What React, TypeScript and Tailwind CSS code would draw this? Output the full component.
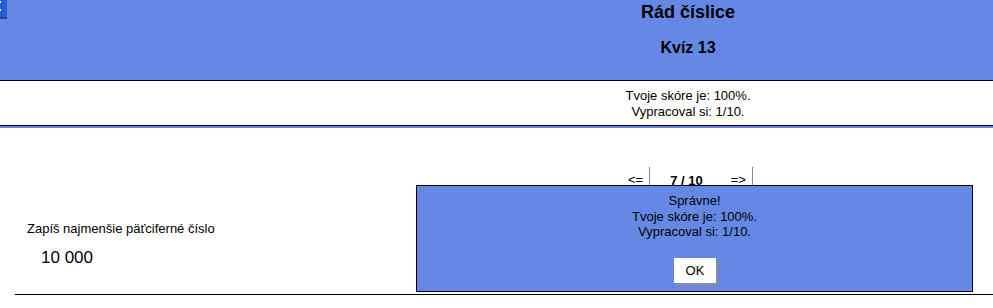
import React from "react";

export default function App() {
  return (
    <div className="relative w-[993px] h-[308px] overflow-hidden bg-white text-black font-['Liberation_Sans',Arial,sans-serif]">
      {/* header */}
      <div className="h-[81px] w-[1376px] bg-[#6488e4] border-b border-black text-center">
        <div className="pt-[2px] text-[18px] leading-[21px] font-bold">Rád číslice</div>
        <div className="mt-[15px] text-[16px] leading-[19px] font-bold">Kvíz 13</div>
      </div>

      {/* score */}
      <div className="h-[45px] w-[1376px] border-b border-black text-center text-[13px] leading-[16px] pt-[7px]">
        <div>Tvoje skóre je: 100%.</div>
        <div>Vypracoval si: 1/10.</div>
      </div>
      <div className="h-[2px] bg-[#6488e4]" />

      {/* navigation */}
      <div className="mt-[39px] h-[20px] flex pl-[628px] text-[13px] leading-[15px]">
        <span className="pt-[5px]">&lt;=</span>
        <span className="ml-[6px] w-px bg-[#8a8a8a]" />
        <span className="pt-[6px] ml-[20px] font-bold">7 / 10</span>
        <span className="pt-[5px] ml-[28px]">=&gt;</span>
        <span className="ml-[6px] w-px bg-[#8a8a8a]" />
      </div>

      {/* question */}
      <div className="ml-[15px]">
        <div className="mt-[34px] pl-[12px] text-[13px] leading-[15px]">Zapíš najmenšie päťciferné číslo</div>
        <div className="mt-[12px] pl-[26px] text-[17px] leading-[20px]">10 000</div>
        <div className="mt-[26px] border-t border-black" />
      </div>

      {/* modal */}
      <div className="absolute left-[416px] top-[185px] w-[557px] h-[107px] border border-black bg-[#6488e4] text-center text-[13px] leading-[15.5px]">
        <div className="pt-[7px]">
          <div>Správne!</div>
          <div>Tvoje skóre je: 100%.</div>
          <div>Vypracoval si: 1/10.</div>
        </div>
        <div className="mt-[18px] flex justify-center">
          <button className="w-[42px] h-[25px] bg-white text-[13px] leading-[15px] text-black shadow-[2px_2px_0_#8c8c8c] ml-[1px]">
            OK
          </button>
        </div>
      </div>

      {/* top-left tab */}
      <div className="absolute left-0 top-0 w-[7px] h-[19px] bg-[#2b5fd9] border-b-2 border-[#1c45b0]">
        <div className="absolute left-0 top-[1px] w-px h-[2px] bg-white" />
        <div className="absolute left-0 top-[9px] w-px h-[2px] bg-white" />
      </div>
    </div>
  );
}
